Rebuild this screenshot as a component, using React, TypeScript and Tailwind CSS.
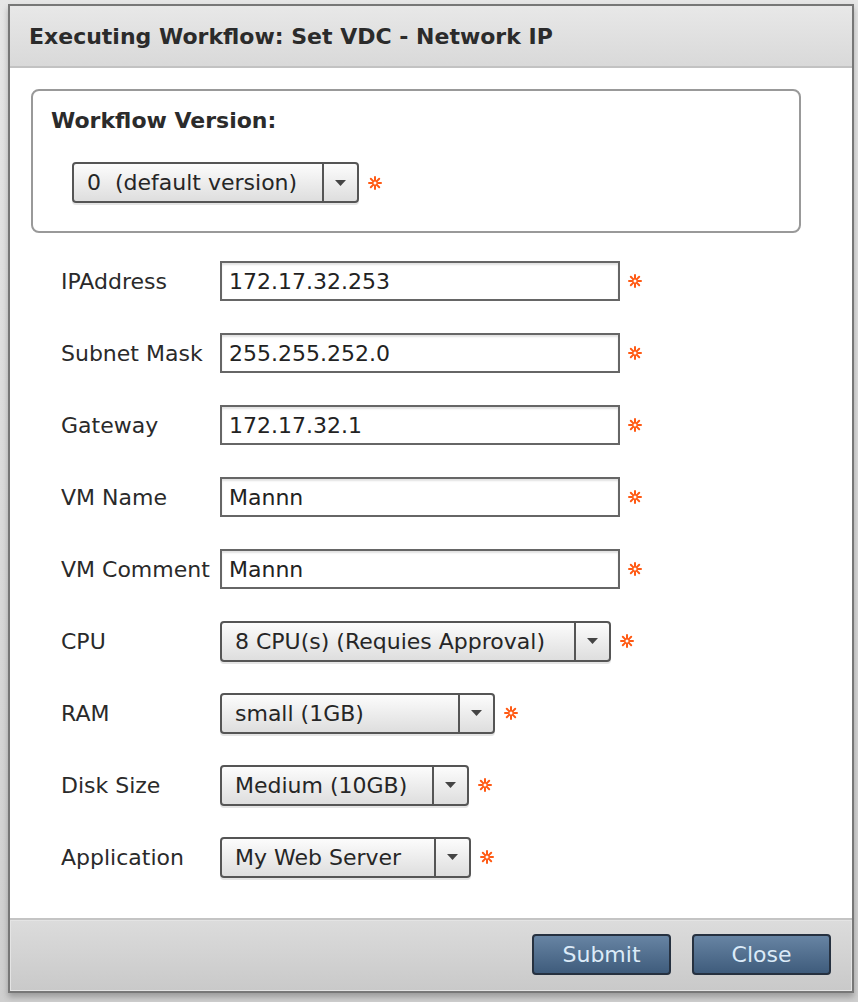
import React from "react";

const Req = () => (
  <svg width="14" height="14" viewBox="0 0 14 14" className="shrink-0">
    <g stroke="#ff5a14" strokeWidth="2" strokeLinecap="round">
      <line x1="7" y1="1" x2="7" y2="4" />
      <line x1="7" y1="10" x2="7" y2="13" />
      <line x1="1" y1="7" x2="4" y2="7" />
      <line x1="10" y1="7" x2="13" y2="7" />
      <line x1="2.8" y1="2.8" x2="4.9" y2="4.9" />
      <line x1="9.1" y1="9.1" x2="11.2" y2="11.2" />
      <line x1="11.2" y1="2.8" x2="9.1" y2="4.9" />
      <line x1="4.9" y1="9.1" x2="2.8" y2="11.2" />
    </g>
    <circle cx="7" cy="7" r="2.2" fill="none" stroke="#ff5a14" strokeWidth="1.4" />
  </svg>
);

const Select = ({ value, width }: { value: string; width: string }) => (
  <div className="flex items-center gap-[9px]">
    <div
      className={`${width} h-[41px] flex rounded-[4px] border-2 border-[#555] bg-gradient-to-b from-[#fcfcfc] to-[#dedede] shadow-[0_2px_0_#e4e4e4]`}
    >
      <div className="flex-1 flex items-center pl-[13px] text-[22px] text-[#262626] whitespace-pre">
        {value}
      </div>
      <div className="w-[35px] border-l-2 border-[#555] flex items-center justify-center">
        <svg width="11" height="6" viewBox="0 0 11 6">
          <path d="M0 0 H11 L5.5 6 Z" fill="#444" />
        </svg>
      </div>
    </div>
    <Req />
  </div>
);

const Input = ({ value }: { value: string }) => (
  <div className="flex items-center gap-[8px]">
    <div className="w-[400px] h-[40px] border-2 border-[#666] bg-white shadow-[inset_0_2px_2px_#e2e2e2] flex items-center pl-[7px] text-[22px] text-[#222]">
      {value}
    </div>
    <Req />
  </div>
);

const Row = ({ label, children }: { label: string; children: React.ReactNode }) => (
  <div className="flex items-center h-[40px]">
    <div className="w-[159px] text-[22px] text-[#2a2a2a] whitespace-nowrap">{label}</div>
    {children}
  </div>
);

export default function App() {
  return (
    <div
      className="w-[858px] h-[1002px] overflow-hidden bg-gradient-to-b from-[#e6e6e6] to-[#cfcfcf] pl-[8px] pt-[4px]"
      style={{ fontFamily: '"DejaVu Sans", Verdana, sans-serif' }}
    >
      <div className="w-[846px] h-[989px] border-2 border-[#777] bg-white flex flex-col shadow-[0_4px_6px_rgba(0,0,0,0.25)]">
        <div className="h-[62px] shrink-0 bg-gradient-to-b from-[#e8e8e8] to-[#d9d9d9] border-b-2 border-[#c2c2c2] flex items-center pl-[19px]">
          <h1 className="text-[22px] font-bold text-[#2b2b2b]">
            Executing Workflow: Set VDC - Network IP
          </h1>
        </div>

        <div className="flex-1 pt-[21px] pl-[21px]">
          <div className="w-[770px] h-[144px] border-2 border-[#999] rounded-[8px] pt-[17px] pl-[18px]">
            <div className="text-[22px] font-bold text-[#2b2b2b] leading-[26px]">Workflow Version:</div>
            <div className="mt-[28px] pl-[21px]">
              <Select value="0  (default version)" width="w-[287px]" />
            </div>
          </div>

          <div className="flex flex-col gap-[32px] pt-[28px] pl-[30px]">
            <Row label="IPAddress">
              <Input value="172.17.32.253" />
            </Row>
            <Row label="Subnet Mask">
              <Input value="255.255.252.0" />
            </Row>
            <Row label="Gateway">
              <Input value="172.17.32.1" />
            </Row>
            <Row label="VM Name">
              <Input value="Mannn" />
            </Row>
            <Row label="VM Comment">
              <Input value="Mannn" />
            </Row>
            <Row label="CPU">
              <Select value="8 CPU(s) (Requies Approval)" width="w-[391px]" />
            </Row>
            <Row label="RAM">
              <Select value="small (1GB)" width="w-[275px]" />
            </Row>
            <Row label="Disk Size">
              <Select value="Medium (10GB)" width="w-[249px]" />
            </Row>
            <Row label="Application">
              <Select value="My Web Server" width="w-[251px]" />
            </Row>
          </div>
        </div>

        <div className="h-[73px] shrink-0 border-t-2 border-[#c4c4c4] bg-gradient-to-b from-[#dcdcdc] to-[#c9c9c9]">
          <div className="h-full border border-[#e4e4e4] flex items-center justify-end gap-[21px] pr-[20px] pb-[2px]">
            <button className="w-[139px] h-[41px] rounded-[4px] border-2 border-[#263140] bg-gradient-to-b from-[#6784a3] to-[#3f5c7c] text-[22px] text-[#dcebf8]">
              Submit
            </button>
            <button className="w-[139px] h-[41px] rounded-[4px] border-2 border-[#263140] bg-gradient-to-b from-[#6784a3] to-[#3f5c7c] text-[22px] text-[#dcebf8]">
              Close
            </button>
          </div>
        </div>
      </div>
    </div>
  );
}
